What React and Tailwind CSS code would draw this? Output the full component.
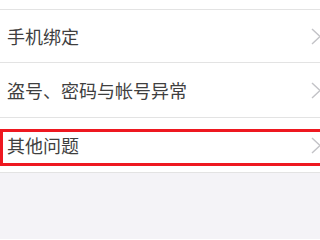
const ROWS = [
  { id: 'phone', label: '手机绑定', h: 'h-[52px]' },
  { id: 'stolen', label: '盗号、密码与帐号异常', h: 'h-[54px]' },
  { id: 'other', label: '其他问题', h: 'h-[54px]' },
]

function Chevron() {
  return (
    <svg width="10" height="17" viewBox="0 0 10 17" className="shrink-0 -mr-px">
      <polyline points="1,1 9,8.5 1,16" fill="none" stroke="#c3c3c7" strokeWidth="1.4" />
    </svg>
  )
}

export default function App() {
  return (
    <div
      className="relative h-[239px] w-[320px] overflow-hidden bg-[#f4f3f7]"
      style={{ fontFamily: '"Noto Sans CJK SC", "Noto Sans", sans-serif' }}
    >
      <div className="h-[9px] bg-white" />
      <div className="h-px bg-[#e3e3e3]" />

      {ROWS.map((row) => (
        <div key={row.id}>
          <div className={`flex items-center justify-between bg-white pl-[7px] ${row.h}`}>
            <span className="text-[18px] leading-none text-[#3f3f3f]">{row.label}</span>
            <Chevron />
          </div>
          <div className="h-px bg-[#e3e3e3]" />
        </div>
      ))}

      {/* highlight box around 其他问题 */}
      <div className="absolute left-0 top-[129px] h-[37px] w-[323px] border-[3px] border-[#ee1820]" />
    </div>
  )
}
